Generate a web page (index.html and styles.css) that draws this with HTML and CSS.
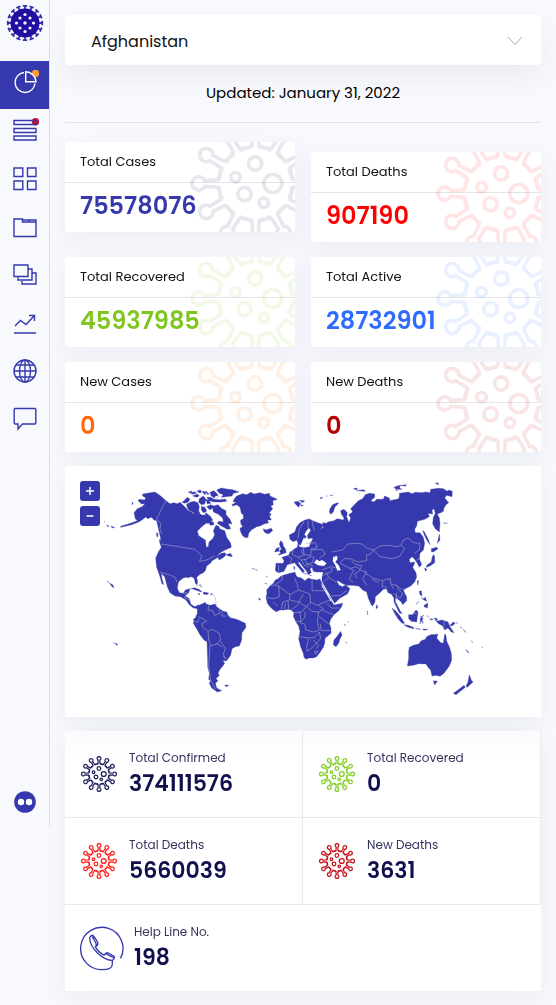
FILE: index.html
```html
<!DOCTYPE html>
<html lang="en">
<head>
<meta charset="utf-8">
<meta name="viewport" content="width=device-width, initial-scale=1">
<title>Covid-19 Dashboard</title>
<link rel="stylesheet" href="styles.css">
</head>
<body>
<svg class="defs" aria-hidden="true">
  <defs>
    <path id="spike" d="M100-46 114-11 153-9A20 20 0 1 1 153 9L114 11 100 46"/>
    <g id="spikes3"><use href="#spike"/><use href="#spike" transform="rotate(30)"/><use href="#spike" transform="rotate(60)"/></g>
    <symbol id="virus" viewBox="-197 -197 394 394">
      <use href="#spikes3"/><use href="#spikes3" transform="rotate(90)"/><use href="#spikes3" transform="rotate(180)"/><use href="#spikes3" transform="rotate(270)"/>
      <circle cx="-1" cy="-60" r="20"/><circle cx="-60" cy="-19" r="14"/><circle cx="52" cy="0" r="27"/><circle cx="-33" cy="32" r="20"/><circle cx="25" cy="58" r="14"/>
    </symbol>
    <path id="tee" d="M13 0H17.500M17.200-2.200V2.200"/>
    <g id="tees4"><use href="#tee"/><use href="#tee" transform="rotate(22.5)"/><use href="#tee" transform="rotate(45)"/><use href="#tee" transform="rotate(67.5)"/></g>
  </defs>
</svg>
<div class="layout">
  <aside class="sidebar">
    <a class="logo" href="#" aria-label="Home">
      <svg viewBox="-19 -19 38 38" width="38" height="38">
        <g fill="none" stroke="#3432a8" stroke-width="1.8"><use href="#tees4"/><use href="#tees4" transform="rotate(90)"/><use href="#tees4" transform="rotate(180)"/><use href="#tees4" transform="rotate(270)"/></g>
        <circle r="14.500" fill="#220fa0"/>
        <g fill="#f2f3ff"><circle r="1.7"/><circle cx="-8.5" r="1.6"/><circle cx="8.5" r="1.6"/><circle cy="-8.5" r="1.6"/><circle cy="8.5" r="1.6"/><circle cx="-5" cy="-5" r="1.6"/><circle cx="5" cy="-5" r="1.6"/><circle cx="-5" cy="5" r="1.6"/><circle cx="5" cy="5" r="1.6"/></g>
      </svg>
    </a>
    <nav class="nav">
      <a class="nav-item active" href="#" aria-label="Dashboard"><svg viewBox="0 0 28 28"><circle cx="24.500" cy="5.500" r="3.700" fill="#ff9838"/><path d="M13 4.500A10 10 0 1 0 24 15.500"/><path d="M14.700 3.800V13.700H25A10.300 10.300 0 0 0 14.700 3.800Z" fill="#3639ad"/></svg></a>
      <a class="nav-item" href="#" aria-label="Countries"><svg viewBox="0 0 28 28"><circle cx="24.500" cy="5.700" r="3.700" fill="#d80d25" stroke="none"/><path d="M3 4.500H25V8.500H3ZM3 12.500H25V16.500H3ZM3 20H25V24H3Z"/></svg></a>
      <a class="nav-item" href="#" aria-label="Widgets"><svg viewBox="0 0 28 28"><path d="M3 4H11.800V12.500H3ZM16.500 4H25V12.500H16.500ZM3 17H11.800V25.500H3ZM16.500 17H25V25.500H16.500Z"/></svg></a>
      <a class="nav-item" href="#" aria-label="Folders"><svg viewBox="0 0 28 28"><path d="M3 7H11.500V10H25V24.500H3ZM11.500 10V8H25V10M18 8V10"/></svg></a>
      <a class="nav-item" href="#" aria-label="Layers"><svg viewBox="0 0 28 28"><path d="M3 5H17V16.500H3ZM17 9H21V20H7V17.500M21 13H25V24H11V21"/></svg></a>
      <a class="nav-item" href="#" aria-label="Trends"><svg viewBox="0 0 28 28"><path d="M4 18 9.500 12.500 15 16.500 23.500 7.500M18 7.500H23.500V13M3 25H25"/></svg></a>
      <a class="nav-item" href="#" aria-label="World"><svg viewBox="0 0 28 28"><circle cx="14" cy="15" r="11"/><ellipse cx="14" cy="15" rx="5.500" ry="11"/><path d="M14 4V26M3 15H25M5 9H23M5 21H23"/></svg></a>
      <a class="nav-item" href="#" aria-label="Messages"><svg viewBox="0 0 28 28"><path d="M4 4.500H24L24.800 5.300V19L24 20H11.500L7 25V20H4L3.200 19V5.300Z"/></svg></a>
    </nav>
    <a class="more" href="#" aria-label="Flickr"><svg viewBox="0 0 22 22" width="22" height="22"><circle cx="11" cy="11" r="10.800" fill="#3639ad"/><circle cx="7" cy="11" r="3.200" fill="#fff"/><circle cx="15" cy="11" r="3.200" fill="#fff"/></svg></a>
  </aside>

  <main class="content">
    <div class="country">
      <select aria-label="Country"><option>Afghanistan</option></select>
      <svg class="chevron" viewBox="0 0 16 10" width="16" height="10"><path d="M1 1 8 8.500 15 1"/></svg>
    </div>
    <p class="updated">Updated: January 31, 2022</p>

    <section class="cards">
      <article class="card cases"><h2>Total Cases</h2><p>75578076</p><svg class="mark"><use href="#virus"/></svg></article>
      <article class="card deaths"><h2>Total Deaths</h2><p>907190</p><svg class="mark"><use href="#virus"/></svg></article>
      <article class="card recovered"><h2>Total Recovered</h2><p>45937985</p><svg class="mark"><use href="#virus"/></svg></article>
      <article class="card live"><h2>Total Active</h2><p>28732901</p><svg class="mark"><use href="#virus"/></svg></article>
      <article class="card new-cases"><h2>New Cases</h2><p>0</p><svg class="mark"><use href="#virus"/></svg></article>
      <article class="card new-deaths"><h2>New Deaths</h2><p>0</p><svg class="mark"><use href="#virus"/></svg></article>
    </section>

    <section class="map">
      <div class="zoom"><button type="button" aria-label="Zoom in"><svg viewBox="0 0 20 20"><path d="M6 10H14M10 6V14"/></svg></button><button type="button" aria-label="Zoom out"><svg viewBox="0 0 20 20"><path d="M6.500 10H13.500"/></svg></button></div>
      <svg class="world" viewBox="15 18 1428 753" role="img" aria-label="World map">
        <g class="land">
          <!-- North America -->
          <path d="M248 102 266 99 285 96 302 108 318 122 330 131 341 128 352 131 360 127 372 138 385 152 394 156 402 161 410 155 416 160 428 166 438 158 445 164 452 170 458 180 448 190 438 190 425 200 412 214 416 227 436 240 439 262 445 260 447 246 458 236 464 224 460 212 468 196 476 199 480 207 494 212 500 232 512 250 514 262 495 270 478 280 470 289 484 280 495 278 498 284 512 280 517 290 506 288 499 284 488 294 477 300 474 292 464 298 455 303 452 309 440 318 436 332 428 340 420 343 410 352 413 366 411 374 406 370 402 354 393 350 385 353 378 352 368 355 355 366 352 385 358 398 370 400 376 390 390 386 386 398 376 408 388 416 392 432 404 440 416 434 422 440 414 446 400 444 388 434 378 420 362 410 345 408 330 398 322 380 314 350 304 340 306 356 311 374 305 370 302 356 298 344 290 322 287 294 295 276 304 262 300 250 302 235 295 205 290 182 282 180 275 172 262 176 258 170 246 180 236 186 215 194 182 202 182 199 212 190 232 182 226 176 222 158 232 146 246 140 255 131 245 132 234 122 238 118 254 120 257 113 248 108Z"/>
          <path d="M290 218 294 220 293 232 290 228ZM298 238 306 254 300 250ZM216 126 219 130 216 134ZM228 166 234 170 230 172Z"/>
          <!-- Arctic islands -->
          <path d="M372 122 382 112 390 118 384 127 374 130 366 127ZM380 133 392 126 402 124 414 128 418 140 416 152 420 160 408 164 398 156 388 152 382 144ZM385 96 396 93 394 98 404 95 410 99 398 103ZM398 108 412 102 418 108 410 112ZM412 92 422 90 424 98 416 98ZM418 116 430 108 438 118 434 132 424 134 416 126ZM438 118 446 120 452 130 442 132ZM424 139 436 143 440 154 430 158 424 150ZM426 94 440 95 448 102 434 104ZM440 112 452 112 462 118 480 119 496 117 500 124 484 126 464 126 448 122ZM450 97 462 92 470 100 478 110 462 113 454 108ZM470 90 484 84 500 87 518 89 537 96 520 100 516 108 498 110 484 112 490 104 478 100Z"/>
          <path d="M440 140 452 134 462 138 474 134 484 145 498 152 498 164 510 178 516 192 504 190 512 206 502 208 484 198 472 190 476 184 490 186 488 174 474 162 460 156 458 144 450 150ZM448 184 460 186 462 194 450 196Z"/>
          <!-- Greenland, Iceland, Svalbard -->
          <path d="M516 134 530 126 520 126 522 118 530 108 548 101 560 104 572 97 582 102 600 98 614 103 628 100 630 108 652 118 638 122 640 134 632 138 638 146 628 158 634 164 628 168 634 180 622 180 626 188 612 192 600 198 590 200 574 210 566 220 564 232 556 233 548 227 542 216 540 205 548 200 542 190 542 180 550 176 550 164 544 160 540 142 530 134 518 138Z"/>
          <path d="M610 206 618 210 634 205 638 212 626 221 616 219 611 212ZM702 126 714 124 722 130 716 142 708 134ZM718 121 734 122 728 128ZM722 134 730 136 724 139Z"/>
          <!-- Caribbean and Atlantic -->
          <path d="M392 386 404 383 420 390 426 396 412 392 402 388ZM430 396 446 399 441 404 430 402ZM414 400 420 402 416 404ZM452 401 458 402 452 404ZM411 376 414 378ZM418 374 424 382 420 378ZM494 675 507 676 498 680ZM141 364 148 368ZM149 370 158 374 162 383 156 380ZM160 548 166 551ZM167 550 174 554 168 555ZM132 184 135 186ZM140 196 147 198 143 200ZM152 199 164 202 158 204ZM576 325 584 328ZM586 328 593 331ZM618 348 623 351ZM614 370 622 372ZM596 414 602 418 598 421Z"/>
          <path class="islands" d="M455 402Q469 406 468 438M420 372 428 382"/>
          <!-- South America -->
          <path d="M416 438 424 432 432 430 434 426 440 433 452 436 465 432 470 440 478 446 490 454 500 456 504 466 512 474 524 476 535 480 556 490 558 502 546 518 545 530 545 540 538 558 526 560 516 566 512 585 500 602 488 602 494 610 490 616 480 628 474 640 478 646 468 656 474 662 466 670 470 684 485 692 472 696 455 684 448 670 452 662 446 658 448 640 443 620 443 600 441 545 432 540 420 524 411 508 405 498 400 490 402 484 400 478 406 474 412 460 412 446Z"/>
          <!-- Africa -->
          <path d="M660 350 672 345 690 340 705 337 708 346 712 351 724 354 735 362 745 354 756 358 770 360 780 357 788 376 800 400 810 412 816 426 822 435 848 430 844 442 836 452 822 464 812 478 808 490 813 505 813 520 795 535 794 550 790 562 778 580 770 590 760 594 748 594 738 598 732 592 730 580 722 560 716 536 720 515 716 498 708 486 700 468 702 458 694 450 684 448 672 450 660 450 648 455 638 448 630 440 622 430 620 420 618 412 621 400 620 390 630 378 640 370 646 360 655 356Z"/>
          <path d="M842 514 846 526 840 536 836 550 828 560 820 554 822 540 832 528ZM864 484 866 488ZM852 494 858 496ZM856 547 862 549ZM922 452 923 465Z"/>
          <!-- Britain and Ireland -->
          <path d="M658 252 662 242 668 248 670 258 677 268 678 278 664 283 654 285 662 278 658 272 664 268ZM648 266 658 262 656 274 644 276Z"/>
          <!-- Scandinavia -->
          <path d="M690 238 688 225 698 220 705 215 710 200 720 188 735 180 748 177 758 182 778 190 790 194 784 206 768 205 760 214 758 234 744 236 742 224 752 212 748 204 738 214 733 224 739 230 728 244 725 254 716 254 710 240 700 245Z"/>
          <!-- Eurasia -->
          <path d="M648 310 670 310 672 302 666 292 686 286 690 277 704 266 712 262 714 250 719 261 734 263 748 260 752 248 758 238 756 226 762 205 778 200 782 208 790 202 788 188 800 190 804 186 822 182 832 176 850 180 852 174 844 162 842 152 852 148 862 158 860 170 867 188 872 174 866 164 878 156 872 146 895 122 908 116 916 104 928 100 944 102 944 112 932 122 942 126 950 118 970 118 974 108 988 114 990 122 1016 116 1018 108 1018 100 1045 96 1056 101 1066 97 1085 98 1096 96 1110 98 1112 88 1136 85 1150 86 1162 94 1166 90 1177 94 1176 110 1160 106 1154 114 1166 128 1158 134 1152 144 1150 154 1142 158 1132 162 1138 174 1140 190 1138 216 1126 206 1118 192 1120 172 1126 160 1122 146 1116 150 1118 162 1104 160 1108 170 1094 178 1072 184 1070 198 1064 208 1066 218 1080 218 1090 232 1094 250 1090 270 1080 280 1078 296 1085 314 1078 322 1072 310 1064 298 1056 290 1048 298 1050 308 1064 306 1062 314 1058 322 1068 338 1070 350 1064 366 1052 378 1036 386 1028 384 1034 400 1040 410 1040 422 1028 434 1024 426 1014 418 1008 412 1006 424 1014 440 1026 462 1018 458 1008 438 1002 426 1002 414 994 402 984 398 980 386 970 388 960 398 946 410 945 425 938 438 934 435 925 415 920 396 908 390 896 378 876 376 860 376 850 372 834 362 830 364 842 376 846 378 858 376 870 386 862 402 840 414 824 430 818 420 808 402 796 382 786 364 786 350 790 336 768 336 760 334 756 322 750 326 754 338 744 344 740 334 730 322 718 306 714 308 724 322 734 334 728 338 722 330 710 316 704 308 698 310 690 312 682 314 672 334 655 338 646 332Z"/>
          <path d="M730 340 740 342ZM748 346 758 346ZM779 345 786 343ZM701 318 705 322 703 330ZM812 163 808 155 810 146 818 134 830 129 836 129 824 142 820 156ZM780 114 788 111 784 117ZM798 109 802 108ZM810 107 820 105ZM880 86 892 84 890 90ZM890 92 912 89 916 94ZM1002 82 1012 78 1022 76 1018 84 1026 88 1008 88ZM1022 76 1040 74 1036 79ZM1006 90 1014 92ZM1126 70 1134 68 1136 74ZM1150 189 1162 190ZM1088 212 1092 214 1104 236 1110 254 1104 246 1096 232ZM1138 222 1140 240 1132 250ZM1114 266 1130 262 1134 266 1120 276 1114 275ZM1120 284 1124 288 1124 308 1110 318 1098 322 1102 314 1114 306 1116 294ZM1094 324 1101 328 1096 334ZM950 434 954 442 948 446ZM1072 360 1076 364 1073 376ZM1030 384 1036 386 1032 390Z"/>
          <!-- South-east Asia -->
          <path d="M996 444 1008 454 1020 468 1034 490 1026 490 1014 476 1004 460ZM1032 494 1044 496 1060 502 1062 506 1044 502ZM1066 506 1074 506 1082 508ZM1088 507 1104 508 1092 511ZM1046 464 1058 464 1068 450 1074 456 1072 470 1070 486 1054 484 1046 476ZM1082 470 1092 466 1082 474 1090 474 1086 480 1090 490 1082 482 1080 492ZM1078 394 1084 392 1086 408 1080 404ZM1084 412 1088 418 1096 412 1100 424 1092 420ZM1094 434 1104 430 1102 444 1092 440ZM1076 424 1068 434ZM1102 466 1106 472ZM1110 476 1120 478 1112 480ZM1122 474 1132 476 1130 484 1146 480 1164 486 1170 500 1182 518 1174 516 1164 504 1154 510 1148 498 1134 490ZM1180 486 1186 490 1176 498 1170 496ZM1188 486 1194 492ZM1200 500 1206 504ZM1210 508 1218 518 1214 514ZM1234 542 1238 548ZM1218 568 1227 578 1222 576ZM1266 560 1268 564Z"/>
          <!-- Australia and New Zealand -->
          <path d="M1048 562 1060 556 1076 552 1084 542 1096 538 1100 530 1112 524 1134 523 1130 534 1142 548 1150 550 1154 522 1158 526 1160 544 1168 560 1174 580 1175 600 1168 618 1152 640 1140 649 1128 646 1116 648 1112 630 1106 624 1098 612 1076 611 1060 616 1042 618 1046 596 1046 574ZM1120 662 1132 664 1124 675ZM1228 644 1234 660 1239 666 1222 682 1218 678 1224 666ZM1212 676 1216 682 1198 696 1188 704 1180 700 1194 690Z"/>
        </g>
        <g class="water">
          <path d="M762 308 770 298 778 304 786 300 800 310 792 318 774 316ZM820 290 832 288 832 298 826 306 836 316 842 330 832 332 826 316 818 304ZM732 232 736 240 744 240 748 252 738 254 732 248 728 256 722 256ZM745 205 750 212 742 226 736 222ZM784 368 792 386 804 404 816 424 812 424 798 400 786 380ZM832 362 842 374 852 376 848 380 836 374ZM754 340 786 342 786 352 756 352ZM422 158 434 160 438 164 428 164ZM434 98 444 102 438 104ZM464 110 480 104 482 107 466 114Z"/>
        </g>
        <g class="borders">
          <path d="M318 122 303 150 290 178 302 190 300 208 306 222M304 252 380 264 404 268 416 278 426 288 418 304 440 300 464 288M300 336 332 346 346 352 350 366M366 400 380 398 374 414 390 420M446 436 444 450 458 452 464 466 480 460 476 448M486 452 486 468 498 468M414 470 428 476 440 484 426 490 428 502 444 514 456 508 478 520 482 540 470 552 454 558 446 540 444 514M404 482 412 488 418 476M482 544 496 566 490 582 496 596M468 550 486 560M450 556 446 620 452 660 466 688M490 588 500 598"/>
          <path d="M668 348 664 362 646 374 634 378M646 374 666 386 690 404 716 390 712 374 704 354M656 376 658 410 640 416 620 412M690 404 688 420 668 426 664 448M716 390 750 402 752 428M690 420 716 426 730 402M696 448 712 436 722 424M756 358 756 392 794 392M752 428 738 440 722 430M750 426 772 436 794 426 810 420M700 458 724 456 740 440 756 454 776 456 790 446 776 436M720 456 722 484 706 484M736 456 734 472 720 488 734 492 738 510 762 516 778 510 772 490 776 456M778 470 806 492M786 450 800 456 822 464M800 430 814 444 842 444M780 490 784 512 812 512M716 530 748 534 764 532 778 516 782 536 760 560 742 574 740 560 746 536M760 540 776 556 770 566M764 574 774 574 770 582 764 580ZM640 426 652 438M676 430 674 448M684 422 686 446"/>
          <path d="M732 186 718 206 714 236M744 182 744 204M756 182 762 210M684 288 696 296 690 310M700 268 696 284 714 292 730 286 724 270M730 264 732 284 752 286 754 264M740 250 766 248 772 262 756 268M754 270 786 268 796 282 778 294M714 292 724 300 738 298 750 290 762 292 756 310 740 310 734 298M724 300 732 314 746 322M738 312 760 318M656 314 656 336M786 330 808 322 818 328 812 338 796 340M810 318 828 324M786 348 800 340 806 352 830 368M806 352 790 366M814 408 840 406 860 392"/>
          <path d="M816 276 848 270 864 252 890 250 906 252 920 264 940 270 930 284 920 284 920 302 894 306 870 296 854 296 840 308M940 270 960 258 984 256 1008 260 1024 256 1034 266 1018 290 996 296 960 290 940 270M1024 256 1030 240 1044 234 1060 248 1080 250 1078 270 1064 280M840 310 868 324 882 332 872 346 868 360 880 366M868 326 890 320 900 328 906 318 884 312 874 302M900 330 884 342 892 356M900 330 920 336 908 356 920 376M914 338 938 354 964 362 990 356M936 358 956 368M968 362 966 380 980 382M990 354 992 370 1000 386M994 372 1010 376 1016 390 1028 400 1020 414 1008 406 1000 400M1010 376 1024 388M1010 398 1006 430M1058 458 1070 462M1070 300 1078 296M1152 482 1152 510"/>
        </g>
      </svg>
    </section>

    <section class="stats">
      <div class="stat navy"><svg><use href="#virus"/></svg><div><h3>Total Confirmed</h3><p>374111576</p></div></div>
      <div class="stat green"><svg><use href="#virus"/></svg><div><h3>Total Recovered</h3><p>0</p></div></div>
      <div class="stat red"><svg><use href="#virus"/></svg><div><h3>Total Deaths</h3><p>5660039</p></div></div>
      <div class="stat crimson"><svg><use href="#virus"/></svg><div><h3>New Deaths</h3><p>3631</p></div></div>
      <div class="stat help"><svg viewBox="0 0 132 136"><path d="M122 98A64 64 0 1 0 66 132Q96 132 97 117V104M97 104C72 104 30 70 29 38Q29 29 38 28C43 33 50 43 53 50Q56 57 46 63C51 72 61 82 72 88Q78 79 84 81L103 92Q106 98 97 104M37 32 48 53Q50 57 46 63M72 88Q78 82 82 86L101 96"/></svg><div><h3>Help Line No.</h3><p>198</p></div></div>
    </section>
  </main>
</div>
</body>
</html>
```
FILE: styles.css
```css
* { box-sizing: border-box; }
body { margin: 0; background: #f7f9fd; color: #111; font-family: Poppins, Inter, "Noto Sans", sans-serif; font-size: 13px; }
h2, h3, p { margin: 0; }
.defs { position: absolute; width: 0; height: 0; }
.layout { display: flex; align-items: flex-start; }

.sidebar { display: flex; flex-direction: column; align-items: center; flex: 0 0 50px; min-height: 827px; padding: 4px 0 14px; border-right: 1px solid #dcdee4; }
.logo { height: 57px; }
.logo svg, .more svg { display: block; }
.nav { width: 100%; }
.nav-item { display: block; height: 48px; padding: 7px 10px 7px 11px; }
.nav-item svg { display: block; width: 28px; height: 28px; fill: none; stroke: #3639ad; stroke-width: 1.4; }
.nav-item.active { background: #3639ad; }
.nav-item.active path { stroke: #fff; }
.nav-item.active circle { stroke: none; }
.more { margin-top: auto; }

.content { flex: 1; min-width: 0; padding: 15px 15px 14px; }
.country { position: relative; }
.country select { appearance: none; display: block; width: 100%; height: 50px; padding: 2px 48px 0 26px; border: 0; border-radius: 4px; background: #fff; color: #111; font: inherit; font-size: 16px; box-shadow: 0 12px 30px rgba(20, 24, 70, .06); }
.chevron { position: absolute; right: 18px; top: 21px; fill: none; stroke: #aaa; pointer-events: none; }
.updated { padding: 16px 0 18px; border-bottom: 1px solid #e0e2e7; font-size: 15px; line-height: 23px; text-align: center; color: #000; }

.cards { display: grid; grid-template-columns: 1fr 1fr; gap: 15px 16px; align-items: start; padding: 19px 0 14px; }
.card { position: relative; overflow: hidden; border-radius: 4px; background: #fff; }
.card.deaths { margin-top: 10px; }
.cards, .map, .stats { filter: drop-shadow(0 8px 12px rgba(20, 24, 70, .05)); }
.card h2 { padding: 9px 15px 10px; border-bottom: 1px solid #e4e4e6; font-size: 13px; font-weight: 400; line-height: 21px; }
.card p { padding: 7px 15px 10px; font-size: 24px; font-weight: 600; line-height: 32px; }
.mark { position: absolute; top: -24px; right: -26px; width: 131px; height: 131px; fill: none; stroke: currentColor; stroke-width: 11; opacity: .1; }
.cases { color: #3639ad; }
.cases .mark { color: #14145c; }
.deaths { color: #f00; }
.recovered { color: #7fc71e; }
.live { color: #2f6bff; }
.new-cases { color: #ff6a10; }
.new-deaths { color: #b50000; }
.card h2 { color: #111; }

.map { position: relative; background: #fff; }
.world { display: block; width: 100%; }
.land { fill: #3639ad; stroke: #3639ad; stroke-width: 1; stroke-linejoin: round; }
.islands { fill: none; stroke-width: 2; stroke-dasharray: 3 4; }
.water { fill: #fff; }
.borders { fill: none; stroke: #9a9bc9; stroke-width: 2; stroke-linejoin: round; }
.zoom { position: absolute; left: 15px; top: 15px; display: grid; gap: 5px; }
.zoom button { width: 20px; height: 20px; padding: 0; border: 0; border-radius: 3px; background: #3639ad; }
.zoom svg { display: block; width: 20px; height: 20px; fill: none; stroke: #fff; stroke-width: 1.5; }

.stats { display: grid; grid-template-columns: 1fr 1fr; margin-top: 14px; background: linear-gradient(#fafbfc, #fff 30px); }
.stat { display: flex; align-items: center; gap: 12px; height: 87px; padding: 0 16px; border-right: 1px solid #e9eaed; border-bottom: 1px solid #e9eaed; }
.stat svg { flex: none; width: 36px; height: 36px; fill: none; stroke: currentColor; stroke-width: 14; }
.stat h3 { color: #34345f; font-size: 12px; font-weight: 400; line-height: 20px; }
.stat p { color: #11104f; font-size: 22px; font-weight: 600; line-height: 32px; }
.navy { color: #25235f; }
.green { color: #84cf2a; }
.red { color: #ff2020; }
.crimson { color: #c4161c; }
.stat.help { grid-column: 1 / -1; gap: 10px; height: 86px; border: 0; padding-left: 15px; color: #3639ad; }
.help svg { width: 44px; height: 45px; stroke-width: 4; }
```
